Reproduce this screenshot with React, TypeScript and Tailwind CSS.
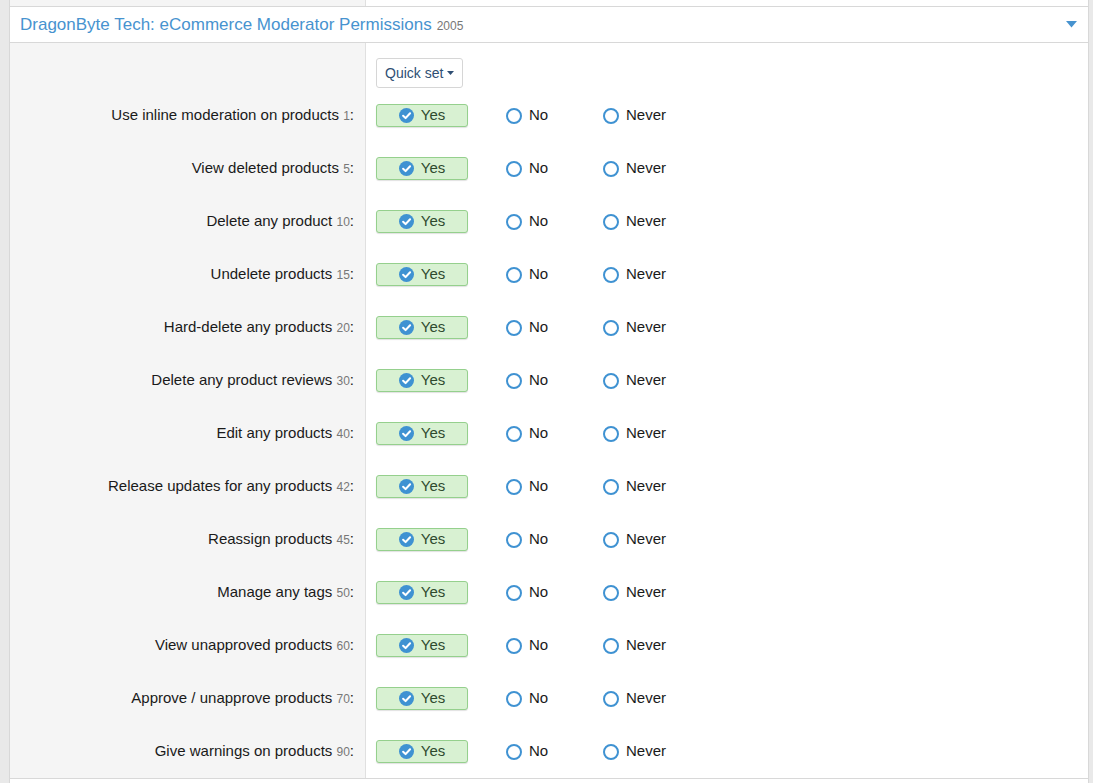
import React from 'react';

const rows: [string, number][] = [
  ['Use inline moderation on products', 1],
  ['View deleted products', 5],
  ['Delete any product', 10],
  ['Undelete products', 15],
  ['Hard-delete any products', 20],
  ['Delete any product reviews', 30],
  ['Edit any products', 40],
  ['Release updates for any products', 42],
  ['Reassign products', 45],
  ['Manage any tags', 50],
  ['View unapproved products', 60],
  ['Approve / unapprove products', 70],
  ['Give warnings on products', 90],
];

function CheckIcon() {
  return (
    <svg width="15" height="15" viewBox="0 0 16 16">
      <circle cx="8" cy="8" r="8" fill="#3f92d2" />
      <path d="M4.4 8.3 L7 10.8 L11.8 5.6" stroke="#fff" strokeWidth="2.2" fill="none" strokeLinecap="round" strokeLinejoin="round" />
    </svg>
  );
}

function Radio({ label }: { label: string }) {
  return (
    <div className="flex items-center gap-[7px]">
      <span className="w-[16px] h-[16px] rounded-full border-2 border-[#3f92d2] bg-white" />
      <span>{label}</span>
    </div>
  );
}

export default function App() {
  return (
    <div
      className="w-[1093px] h-[783px] overflow-hidden bg-[#e9e9e9] text-[#1a1a1a] pl-[9px] pr-[4px]"
      style={{ fontFamily: '"Liberation Sans", Arial, sans-serif' }}
    >
      <div className="border-l border-r border-[#d8d8d8] bg-white h-full">
        {/* tail of previous block */}
        <div className="flex h-[7px] border-b border-[#d8d8d8]">
          <div className="w-[356px] bg-[#f5f5f5] border-r border-[#e0e0e0]" />
          <div className="flex-1 bg-white" />
        </div>

        {/* header */}
        <div className="h-[36px] flex items-center justify-between pl-[10px] pr-[11px] border-b border-[#d8d8d8] bg-white">
          <div className="flex items-baseline gap-[5px]">
            <span className="text-[17px] text-[#4793cf]">DragonByte Tech: eCommerce Moderator Permissions</span>
            <span className="text-[12px] text-[#777]">2005</span>
          </div>
          <svg width="11" height="7" viewBox="0 0 11 7">
            <path d="M0 0 H11 L5.5 6.5 Z" fill="#4793cf" />
          </svg>
        </div>

        {/* body */}
        <div className="border-b border-[#d8d8d8]">
          <div className="flex">
            <div className="w-[356px] bg-[#f5f5f5] border-r border-[#e0e0e0]" />
            <div className="flex-1 pl-[10px] pt-[15px] pb-[1px]">
              <button className="h-[30px] px-[8px] flex items-center gap-[4px] border border-[#d6d6d6] rounded-[3px] bg-white text-[14px] text-[#2f4f74]">
                Quick set
                <svg width="7" height="4" viewBox="0 0 7 4">
                  <path d="M0 0 H7 L3.5 4 Z" fill="#2f4f74" />
                </svg>
              </button>
            </div>
          </div>
          {rows.map(([label, n]) => (
            <div key={label} className="flex h-[53px]">
              <div className="w-[356px] bg-[#f5f5f5] border-r border-[#e0e0e0] flex items-center justify-end pr-[11px] text-[15px]">
                <span>
                  {label} <span className="text-[12px] text-[#777]">{n}</span>:
                </span>
              </div>
              <div className="flex-1 flex items-center pl-[10px] text-[15px]">
                <div className="w-[92px] h-[23px] flex items-center justify-center gap-[7px] rounded-[3px] border border-[#95d08d] bg-[#d8f1d2] text-[#2f4a2f] shadow-[0_1px_1px_rgba(0,0,0,0.12)]">
                  <CheckIcon />
                  <span>Yes</span>
                </div>
                <div className="ml-[38px] w-[97px]">
                  <Radio label="No" />
                </div>
                <Radio label="Never" />
              </div>
            </div>
          ))}
        </div>
      </div>
    </div>
  );
}
